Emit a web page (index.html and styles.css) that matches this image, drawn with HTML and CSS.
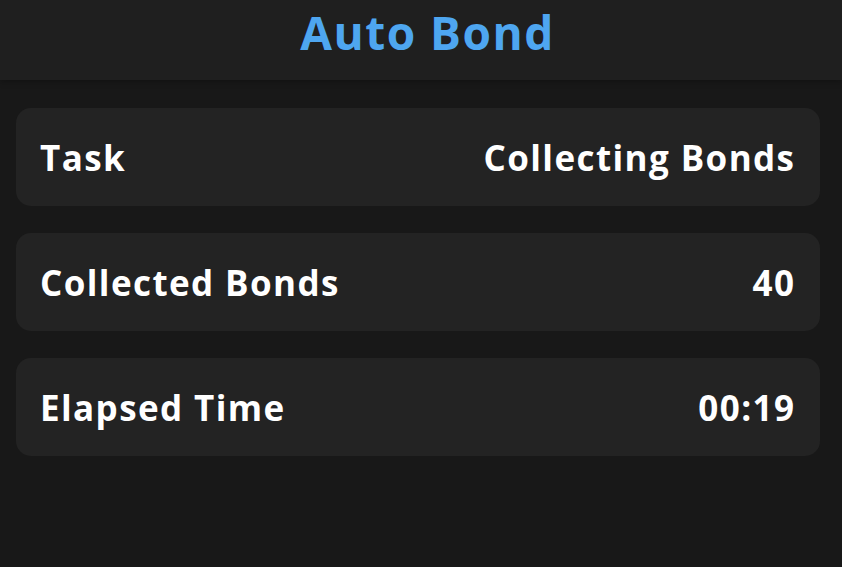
FILE: index.html
```html
<!DOCTYPE html>
<html>
<head>
<meta charset="utf-8">
<link rel="stylesheet" href="styles.css">
</head>
<body>
<header class="header">
  <h1 class="title">Auto Bond</h1>
</header>
<main class="list">
  <div class="row"><span class="label">Task</span><span class="value">Collecting Bonds</span></div>
  <div class="row"><span class="label">Collected Bonds</span><span class="value">40</span></div>
  <div class="row"><span class="label">Elapsed Time</span><span class="value">00:19</span></div>
</main>
</body>
</html>
```
FILE: styles.css
```css
html, body {
  margin: 0;
  padding: 0;
  background: #181818;
  height: 100%;
  font-family: "Open Sans", "Liberation Sans", sans-serif;
}
.header {
  height: 80px;
  background: #1f1f1f;
  display: flex;
  justify-content: center;
  align-items: flex-start;
  box-shadow: 0 2px 6px rgba(0,0,0,0.25);
}
.title {
  margin: 0;
  padding: 4px 0 0 13px;
  font-size: 46px;
  font-weight: 700;
  letter-spacing: 1.5px;
  color: #4ea6f0;
  line-height: 56px;
}
.list {
  display: flex;
  flex-direction: column;
  gap: 27px;
  padding: 28px 22px 0 16px;
}
.row {
  height: 98px;
  box-sizing: border-box;
  background: #232323;
  border-radius: 15px;
  display: flex;
  align-items: center;
  justify-content: space-between;
  padding: 0 26px 0 24px;
  color: #ffffff;
  font-size: 35px;
  font-weight: 700;
  letter-spacing: 1.4px;
}
.value {
  margin-right: -1.4px;
}
```
